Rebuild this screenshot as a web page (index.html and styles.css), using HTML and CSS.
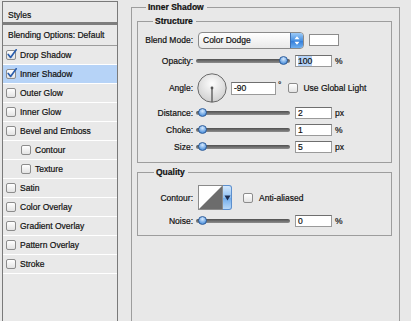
FILE: index.html
```html
<!DOCTYPE html>
<html lang="en">
<head>
<meta charset="UTF-8">
<title>Layer Style - Inner Shadow</title>
<link rel="stylesheet" href="styles.css">
</head>
<body>
  <div class="dialog">
    <!-- style list on the left -->
    <div class="styles-list">
      <div class="list-head">Styles</div>
      <div class="list-blend">Blending Options: Default</div>
      <div class="item"><span class="cb checked"><svg width="12" height="12" viewBox="0 0 12 12"><path d="M2.2 6.5 L4.6 9.4 L10.2 1.8" fill="none" stroke="#2b5ead" stroke-width="1.7" stroke-linecap="round" stroke-linejoin="round"/></svg></span>Drop Shadow</div>
      <div class="item selected"><span class="cb checked"><svg width="12" height="12" viewBox="0 0 12 12"><path d="M2.2 6.5 L4.6 9.4 L10.2 1.8" fill="none" stroke="#2b5ead" stroke-width="1.7" stroke-linecap="round" stroke-linejoin="round"/></svg></span>Inner Shadow</div>
      <div class="item"><span class="cb"></span>Outer Glow</div>
      <div class="item"><span class="cb"></span>Inner Glow</div>
      <div class="item"><span class="cb"></span>Bevel and Emboss</div>
      <div class="item sub"><span class="cb"></span>Contour</div>
      <div class="item sub"><span class="cb"></span>Texture</div>
      <div class="item"><span class="cb"></span>Satin</div>
      <div class="item"><span class="cb"></span>Color Overlay</div>
      <div class="item"><span class="cb"></span>Gradient Overlay</div>
      <div class="item"><span class="cb"></span>Pattern Overlay</div>
      <div class="item"><span class="cb"></span>Stroke</div>
    </div>

    <!-- settings for the selected effect -->
    <fieldset class="group main">
      <legend>Inner Shadow</legend>

      <fieldset class="group sub-group">
        <legend>Structure</legend>

        <div class="row blend-row">
          <span class="lbl">Blend Mode:</span>
          <div class="select">
            <span class="select-text">Color Dodge</span>
            <span class="stepper"><svg width="12" height="15" viewBox="0 0 12 15"><path d="M3.5 6.3 L6 3.2 L8.5 6.3Z M3.5 8.7 L6 11.8 L8.5 8.7Z" fill="#fff"/></svg></span>
          </div>
          <span class="swatch"></span>
        </div>

        <div class="row">
          <span class="lbl">Opacity:</span>
          <div class="slider"><div class="track"></div><span class="thumb at-max"></span></div>
          <span class="field"><span class="sel">100</span></span>
          <span class="unit">%</span>
        </div>

        <div class="row angle-row">
          <span class="lbl">Angle:</span>
          <svg class="dial" width="30" height="30" viewBox="0 0 30 30">
            <defs>
              <radialGradient id="dialFill" cx="50%" cy="35%" r="65%">
                <stop offset="0" stop-color="#fdfdfd"/>
                <stop offset="1" stop-color="#cfcfcf"/>
              </radialGradient>
            </defs>
            <circle cx="15" cy="15" r="14.2" fill="url(#dialFill)" stroke="#6a6a6a"/>
            <line x1="15" y1="15" x2="15" y2="29" stroke="#555" stroke-width="1.3"/>
            <circle cx="15" cy="15" r="1.4" fill="#555"/>
          </svg>
          <span class="field angle-field">-90</span>
          <span class="deg">&deg;</span>
          <span class="cb plain"></span>
          <span class="check-text">Use Global Light</span>
        </div>

        <div class="row tight">
          <span class="lbl">Distance:</span>
          <div class="slider"><div class="track"></div><span class="thumb"></span></div>
          <span class="field">2</span>
          <span class="unit">px</span>
        </div>

        <div class="row tight">
          <span class="lbl">Choke:</span>
          <div class="slider"><div class="track"></div><span class="thumb"></span></div>
          <span class="field">1</span>
          <span class="unit">%</span>
        </div>

        <div class="row tight">
          <span class="lbl">Size:</span>
          <div class="slider"><div class="track"></div><span class="thumb"></span></div>
          <span class="field">5</span>
          <span class="unit">px</span>
        </div>
      </fieldset>

      <fieldset class="group sub-group quality">
        <legend>Quality</legend>

        <div class="row contour-row">
          <span class="lbl">Contour:</span>
          <div class="contour">
            <svg width="25" height="25" viewBox="0 0 25 25">
              <rect x="0.5" y="0.5" width="24" height="24" fill="#fff" stroke="#8a8a8a"/>
              <polygon points="1,24 24,1 24,24" fill="#6c6c6c"/>
            </svg>
            <span class="contour-arrow"><svg width="7" height="6" viewBox="0 0 7 6"><path d="M0.5 0.5 L6.5 0.5 L3.5 5.5Z" fill="#1d2f52"/></svg></span>
          </div>
          <span class="cb plain aa"></span>
          <span class="check-text">Anti-aliased</span>
        </div>

        <div class="row noise-row">
          <span class="lbl">Noise:</span>
          <div class="slider"><div class="track"></div><span class="thumb"></span></div>
          <span class="field">0</span>
          <span class="unit">%</span>
        </div>
      </fieldset>
    </fieldset>
  </div>
</body>
</html>
```

FILE: styles.css
```css
body {
  margin: 0;
  background-color: #e8e8e8;
  font-family: "Liberation Sans", Arial, sans-serif;
  font-size: 8.5px;
  color: #111;
  -webkit-text-stroke: 0.2px #111;
  overflow: hidden;
}

.dialog {
  display: flex;
  align-items: flex-start;
  height: 321px;
  overflow: hidden;
}

/* left list */
.styles-list {
  margin: 1px 0 0 2px;
  width: 116px;
  height: 320px;
  box-sizing: border-box;
  border: 1px solid #7a7a7a;
  border-bottom: none;
  background-color: #e9e9e9;
}

.list-head {
  height: 23px;
  box-sizing: border-box;
  padding: 8px 0 0 5px;
  line-height: 10px;
  border-bottom: 3px solid #7d7d7d;
}

.list-blend {
  height: 21px;
  box-sizing: border-box;
  padding-left: 5px;
  line-height: 20px;
  border-bottom: 1px solid #9c9c9c;
}

.item {
  display: flex;
  align-items: center;
  height: 19px;
  box-sizing: border-box;
  padding-left: 3px;
  border-bottom: 1px solid #fff;
}

.item.sub {
  padding-left: 18px;
}

.item.selected {
  background-color: #b6d3f7;
}

.cb {
  position: relative;
  flex: none;
  width: 10px;
  height: 10px;
  box-sizing: border-box;
  border: 1px solid #8c8c8c;
  border-radius: 2px;
  background: linear-gradient(#ffffff, #e3e3e3);
  margin-right: 4px;
}

.cb svg {
  position: absolute;
  left: -1px;
  top: -3px;
}

/* right side group boxes */
.group {
  margin: 0;
  min-width: 0;
  border: 1px solid #9d9d9d;
}

.group legend {
  padding: 0 3px 0 2px;
  line-height: 10px;
  height: 10px;
  font-weight: bold;
}

.main {
  margin: 2px 0 0 13px;
  width: 269px;
  height: 319px;
  box-sizing: border-box;
  padding: 0 7px 0 5px;
  border-bottom: none;
}

.main > legend {
  margin-left: 9px;
}

.sub-group {
  margin-top: 4px;
  padding: 0 0 8px 0;
}

.sub-group > legend {
  margin-left: 15px;
}

.quality {
  padding-bottom: 7px;
}

.quality > legend {
  margin-left: 16px;
}

.row {
  display: flex;
  align-items: center;
  height: 14px;
  margin-top: 5px;
}

.row.tight {
  margin-top: 3px;
}

.lbl {
  flex: none;
  width: 55px;
  text-align: right;
}

/* blend mode */
.blend-row {
  height: 18px;
}

.select {
  display: flex;
  margin-left: 5px;
  width: 106px;
  height: 17px;
  box-sizing: border-box;
  border: 1px solid #8a8a8a;
  border-radius: 4px;
  background: linear-gradient(#ffffff, #e9e9e9);
  overflow: hidden;
}

.select-text {
  flex: 1;
  padding-left: 4px;
  line-height: 15px;
}

.stepper {
  width: 12px;
  background: linear-gradient(#9ccaf7, #4a93e4 50%, #2f7ad9 51%, #6fb0f0);
  border-left: 1px solid #3d6fb3;
}

.stepper svg {
  display: block;
}

.swatch {
  margin-left: 5px;
  width: 30px;
  height: 12px;
  box-sizing: border-box;
  border: 1px solid #8c8c8c;
  background-color: #fff;
}

/* sliders */
.slider {
  position: relative;
  flex: none;
  margin-left: 3px;
  width: 94px;
  height: 14px;
}

.track {
  margin-top: 5px;
  height: 4px;
  border-radius: 2px;
  background: linear-gradient(#4f4f4f, #8d8d8d);
}

.thumb {
  position: absolute;
  top: 2px;
  left: 2px;
  width: 9px;
  height: 9px;
  box-sizing: border-box;
  border: 1px solid #2d5d9c;
  border-radius: 50%;
  background: radial-gradient(circle at 50% 30%, #d6e9fd, #5d9be0 70%, #3b79c8);
}

.thumb.at-max {
  left: auto;
  right: 2px;
}

/* text fields */
.field {
  flex: none;
  margin-left: 5px;
  width: 37px;
  height: 12px;
  box-sizing: border-box;
  border: 1px solid #9a9a9a;
  border-top-color: #6f6f6f;
  background-color: #fff;
  padding-left: 2px;
  line-height: 10px;
}

.field .sel {
  background-color: #b5d3f8;
}

.unit {
  margin-left: 3px;
}

/* angle */
.angle-row {
  height: 30px;
}

.dial {
  flex: none;
  margin-left: 4px;
}

.angle-field {
  margin-left: 4px;
  width: 45px;
  height: 13px;
  line-height: 11px;
}

.deg {
  align-self: flex-start;
  margin: 8px 0 0 2px;
  line-height: 8px;
}

.cb.plain {
  margin-left: 7px;
  margin-right: 5px;
}

/* contour */
.contour-row {
  height: 25px;
  margin-top: 8px;
}

.contour {
  display: flex;
  margin-left: 5px;
}

.contour svg {
  display: block;
}

.contour-arrow {
  display: flex;
  align-items: center;
  justify-content: center;
  width: 9px;
  height: 25px;
  box-sizing: border-box;
  border: 1px solid #5c8fce;
  border-left: none;
  border-radius: 0 3px 3px 0;
  background: linear-gradient(#d4e8fc, #8fc0f2 50%, #6eaaea 51%, #b7d8f8);
}

.cb.aa {
  margin-left: 11px;
  margin-right: 6px;
}

.noise-row {
  margin-top: 4px;
}
```
